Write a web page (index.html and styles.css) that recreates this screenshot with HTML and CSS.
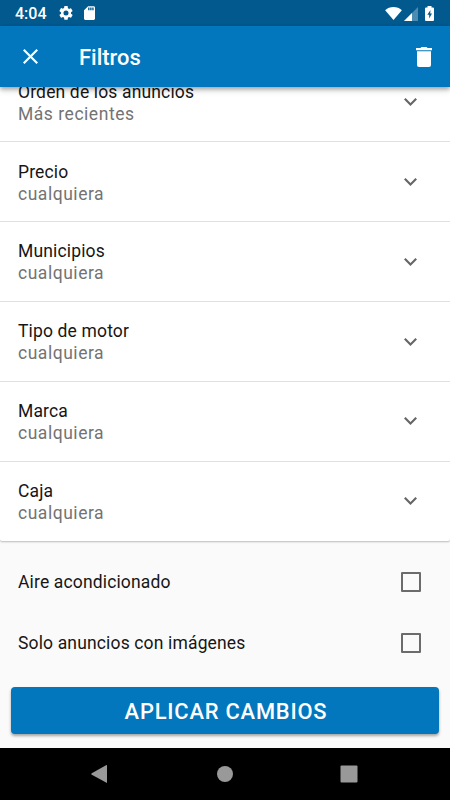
FILE: index.html
```html
<!DOCTYPE html>
<html lang="es">
<head>
  <meta charset="UTF-8">
  <meta name="viewport" content="width=device-width, initial-scale=1">
  <title>Filtros</title>
  <link rel="stylesheet" href="styles.css">
</head>
<body>

  <div class="status-bar">
    <span class="clock">4:04</span>
    <svg class="gear" viewBox="2 2 20 20"><path d="M19.14 12.94c.04-.3.06-.61.06-.94s-.02-.64-.07-.94l2.03-1.58a.49.49 0 0 0 .12-.61l-1.92-3.32a.49.49 0 0 0-.59-.22l-2.39.96a7 7 0 0 0-1.62-.94l-.36-2.54A.48.48 0 0 0 13.92 2h-3.84a.48.48 0 0 0-.47.41l-.36 2.54a7.300 7.300 0 0 0-1.62.94l-2.390-.96a.49.49 0 0 0-.59.22L2.740 8.870a.48.48 0 0 0 .12.61l2.030 1.580a6 6 0 0 0 0 1.880l-2.030 1.580a.49.49 0 0 0-.12.61l1.920 3.320c.12.22.37.29.59.22l2.390-.96c.5.38 1.030.7 1.620.94l.36 2.540c.05.24.24.41.48.41h3.840c.24 0 .44-.17.47-.41l.36-2.540a7.300 7.300 0 0 0 1.620-.94l2.390.96c.22.08.47 0 .59-.22l1.920-3.320a.48.48 0 0 0-.12-.61zM12 15.600A3.600 3.600 0 1 1 12 8.400a3.600 3.600 0 0 1 0 7.200z"/></svg>
    <svg class="sd-card" viewBox="4 2 16 20"><path d="M18 2h-8L4 8v12c0 1.100.9 2 2 2h12c1.100 0 2-.9 2-2V4c0-1.100-.9-2-2-2zm-6 6h-2V4h2zm3 0h-2V4h2zm3 0h-2V4h2z"/></svg>
    <div class="status-right">
      <svg class="wifi" viewBox="0 0 18 14"><path d="M9 14 0 3.500C2.500 1 5.600 0 9 0s6.500 1 9 3.500z"/></svg>
      <svg class="signal" viewBox="0 0 14 14"><path opacity=".3" d="M0 14 14 0v14z"/><path d="M0 14 8 6v8z"/></svg>
      <svg class="battery" viewBox="0 0 9 15"><path fill-rule="evenodd" d="M2.500 1.500V0h4v1.500H8a1 1 0 0 1 1 1V14a1 1 0 0 1-1 1H1a1 1 0 0 1-1-1V2.500a1 1 0 0 1 1-1zM5.500 4 2.300 8.700h1.900V12.500L7 7.500H5.200z"/></svg>
    </div>
  </div>

  <header>
    <svg class="close" viewBox="5 5 14 14"><path d="M19 6.410 17.590 5 12 10.590 6.410 5 5 6.410 10.590 12 5 17.590 6.410 19 12 13.410 17.590 19 19 17.590 13.410 12z"/></svg>
    <h1>Filtros</h1>
    <svg class="trash" viewBox="0 0 16 20"><path d="M1 5h14v13a2 2 0 0 1-2 2H3a2 2 0 0 1-2-2z"/><path opacity=".75" d="M1 4h14v1H1z"/><path d="M0 1h4.500l1-1h5l1 1H16v2.200H0z"/></svg>
  </header>

  <main>
    <div class="filter-list">
      <div class="filter">
        <div>
          <div class="name">Orden de los anuncios</div>
          <div class="value">Más recientes</div>
        </div>
        <svg class="chevron" viewBox="6 8.590 12 7.410"><path d="M16.590 8.590 12 13.170 7.410 8.590 6 10l6 6 6-6z"/></svg>
      </div>
      <div class="filter">
        <div>
          <div class="name">Precio</div>
          <div class="value">cualquiera</div>
        </div>
        <svg class="chevron" viewBox="6 8.590 12 7.410"><path d="M16.590 8.590 12 13.170 7.410 8.590 6 10l6 6 6-6z"/></svg>
      </div>
      <div class="filter">
        <div>
          <div class="name">Municipios</div>
          <div class="value">cualquiera</div>
        </div>
        <svg class="chevron" viewBox="6 8.590 12 7.410"><path d="M16.590 8.590 12 13.170 7.410 8.590 6 10l6 6 6-6z"/></svg>
      </div>
      <div class="filter">
        <div>
          <div class="name">Tipo de motor</div>
          <div class="value">cualquiera</div>
        </div>
        <svg class="chevron" viewBox="6 8.590 12 7.410"><path d="M16.590 8.590 12 13.170 7.410 8.590 6 10l6 6 6-6z"/></svg>
      </div>
      <div class="filter">
        <div>
          <div class="name">Marca</div>
          <div class="value">cualquiera</div>
        </div>
        <svg class="chevron" viewBox="6 8.590 12 7.410"><path d="M16.590 8.590 12 13.170 7.410 8.590 6 10l6 6 6-6z"/></svg>
      </div>
      <div class="filter">
        <div>
          <div class="name">Caja</div>
          <div class="value">cualquiera</div>
        </div>
        <svg class="chevron" viewBox="6 8.590 12 7.410"><path d="M16.590 8.590 12 13.170 7.410 8.590 6 10l6 6 6-6z"/></svg>
      </div>
    </div>

    <div class="options">
      <label class="option">
        <span class="name">Aire acondicionado</span>
        <input type="checkbox">
      </label>
      <label class="option">
        <span class="name">Solo anuncios con imágenes</span>
        <input type="checkbox">
      </label>
    </div>

    <button type="button" class="apply-button">APLICAR CAMBIOS</button>
  </main>

  <!-- Android navigation bar -->
  <nav>
    <svg viewBox="0 0 18 18"><path d="M16 0v18L.8 9.800a1 1 0 0 1 0-1.600L15 .2z"/></svg>
    <svg viewBox="0 0 18 18"><circle cx="9" cy="9" r="8"/></svg>
    <svg viewBox="0 0 18 18"><rect x=".5" y=".5" width="17" height="17" rx="1"/></svg>
  </nav>

</body>
</html>
```
FILE: styles.css
```css
* {
  box-sizing: border-box;
}

body {
  margin: 0;
  height: 100vh;
  display: flex;
  flex-direction: column;
  overflow: hidden;
  background: #fafafa;
  font-family: Roboto, sans-serif;
  color: #161616;
}

svg {
  display: block;
  flex-shrink: 0;
  fill: white;
}

.status-bar {
  height: 26px;
  flex-shrink: 0;
  display: flex;
  align-items: center;
  padding: 0 16px 0 15px;
  background: #01598e;
  color: white;
}

.clock {
  width: 43.5px;
  font-size: 16px;
  font-weight: 500;
  line-height: 26px;
  padding-top: 2px;
}

.gear {
  width: 14px;
  height: 14px;
}

.sd-card {
  width: 11px;
  height: 14px;
  margin-left: 11.5px;
}

.status-right {
  display: flex;
  align-items: center;
  margin-left: auto;
}

.wifi {
  width: 17px;
  height: 13px;
}

.signal {
  width: 14px;
  height: 14px;
  margin: 1px 7px 0 2px;
}

.battery {
  width: 9px;
  height: 15px;
}

header {
  position: relative;
  z-index: 1;
  height: 61px;
  flex-shrink: 0;
  display: flex;
  align-items: center;
  padding: 0 18px 0 23px;
  background: #0277bd;
  box-shadow: 0 2px 4px rgba(0,0,0,0.28), 0 4px 6px rgba(0,0,0,0.12);
}

.close {
  width: 15px;
  height: 15px;
}

h1 {
  margin: 2px 0 0 41px;
  color: white;
  font-size: 21.9px;
  font-weight: 500;
}

.trash {
  width: 16px;
  height: 20px;
  margin-left: auto;
}

main {
  flex: 1;
  min-height: 0;
  overflow: hidden;
}

.filter-list {
  margin-top: -24.6px;
  background: white;
  border-radius: 2px;
  box-shadow: 0 1px 2px rgba(0,0,0,0.26);
}

.filter {
  height: 79.85px;
  display: flex;
  align-items: center;
  justify-content: space-between;
  padding: 1.7px 33px 0 18px;
  border-bottom: 1px solid #e0e0e0;
}

.filter:last-child {
  height: 79.3px;
  border-bottom: none;
}

.name {
  font-size: 17.5px;
  line-height: 22px;
  letter-spacing: 0.15px;
}

.value {
  color: #737373;
  font-size: 17.5px;
  line-height: 22px;
  letter-spacing: 0.53px;
}

.chevron {
  width: 13px;
  height: 8px;
  margin-bottom: 1.4px;
  fill: #666;
}

.options {
  padding-top: 10px;
}

.option {
  height: 61.3px;
  display: flex;
  align-items: center;
  justify-content: space-between;
  padding: 0 29px 0 18px;
}

.option input {
  appearance: none;
  width: 20px;
  height: 20px;
  margin: 0;
  border: 2px solid #6b6b6b;
  border-radius: 1px;
}

.apply-button {
  display: block;
  width: 428px;
  height: 47px;
  margin: 13.9px auto 0;
  padding: 2px 0 0 2px;
  border: none;
  border-radius: 4px;
  background: #0277bd;
  color: white;
  font-family: inherit;
  font-size: 21.9px;
  font-weight: 500;
  letter-spacing: 0.8px;
  box-shadow: 0 2px 3px rgba(0,0,0,0.35);
}

nav {
  height: 52.5px;
  flex-shrink: 0;
  display: flex;
  align-items: center;
  justify-content: space-between;
  padding: 0 92px 0 91px;
  background: black;
}

nav svg {
  width: 18px;
  height: 18px;
  fill: #999;
}
```
